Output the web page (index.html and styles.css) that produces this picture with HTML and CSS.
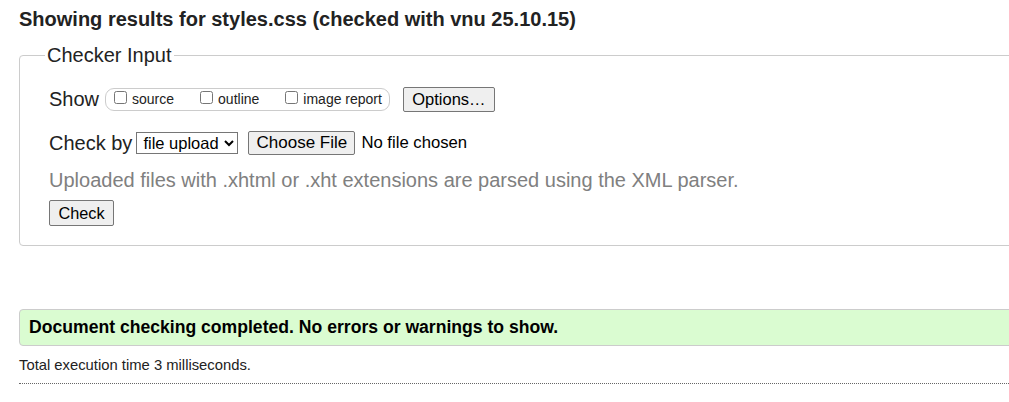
FILE: index.html
```html
<!DOCTYPE html>
<html lang="en">
<head>
<meta charset="utf-8">
<title>Showing results for styles.css - Nu Html Checker</title>
<link rel="stylesheet" href="styles.css">
</head>
<body>
<div class="page">
  <h2 class="title">Showing results for styles.css (checked with vnu 25.10.15)</h2>
  <form class="checker">
    <fieldset class="input-set">
      <legend class="legend">Checker Input</legend>
      <div class="row show-row">
        <span class="row-label">Show</span>
        <span class="opts">
          <label class="opt"><input type="checkbox" class="cb"><span>source</span></label>
          <label class="opt"><input type="checkbox" class="cb"><span>outline</span></label>
          <label class="opt"><input type="checkbox" class="cb"><span>image report</span></label>
        </span>
        <button type="button" class="btn btn-options">Options…</button>
      </div>
      <div class="row check-row">
        <span class="row-label">Check by</span>
        <select class="sel"><option>file upload</option></select>
        <span class="file">
          <button type="button" class="btn btn-file">Choose File</button>
          <span class="file-status">No file chosen</span>
        </span>
      </div>
      <p class="hint">Uploaded files with .xhtml or .xht extensions are parsed using the XML parser.</p>
      <div class="row submit-row">
        <button type="button" class="btn btn-check">Check</button>
      </div>
    </fieldset>
  </form>
  <p class="success">Document checking completed. No errors or warnings to show.</p>
  <p class="stats">Total execution time 3 milliseconds.</p>
  <hr class="rule">
</div>
</body>
</html>
```

FILE: styles.css
```css
html {
  overflow: hidden;
  background: #fff;
}

body {
  margin: 0;
  font-family: "Liberation Sans", Arial, sans-serif;
  color: #222;
}

.page {
  width: 1100px;
  padding-left: 19px;
}

.title {
  margin: 7px 0 0;
  font-size: 20px;
  line-height: 24px;
  font-weight: bold;
  color: #222;
}

.checker {
  margin: 13px 0 0;
}

.input-set {
  margin: 0;
  border: 1px solid #ccc;
  border-radius: 4px;
  padding: 0 0 19px 29px;
}

.legend {
  font-size: 20px;
  line-height: 22px;
  padding: 0 2px;
  margin-left: -4px;
  color: #222;
}

.row {
  display: flex;
  align-items: center;
}

.row-label {
  font-size: 20px;
  line-height: 22px;
}

.show-row {
  margin-top: 20px;
  height: 26px;
}

.opts {
  display: flex;
  align-items: center;
  gap: 26px;
  margin-left: 6px;
  height: 21px;
  padding: 0 7px 0 8px;
  border: 1px solid #ccc;
  border-radius: 9px;
}

.opt {
  display: flex;
  align-items: center;
  font-size: 14px;
}

.cb {
  width: 13px;
  height: 13px;
  margin: 0 5px 4px 0;
}

.btn {
  font-family: "Liberation Sans", Arial, sans-serif;
  font-size: 16.5px;
  color: #000;
  background: #efefef;
  border: 1px solid #767676;
  border-radius: 2px;
  padding: 0 9px;
}

.btn-options {
  margin-left: 13px;
  height: 25px;
  width: 92px;
  padding: 0;
}

.check-row {
  margin-top: 19px;
  height: 24px;
}

.sel {
  margin-left: 4px;
  width: 102px;
  height: 22px;
  font-family: "Liberation Sans", Arial, sans-serif;
  font-size: 16.5px;
  color: #000;
  border: 1px solid #767676;
  border-radius: 0;
  background: #fff;
  padding: 0 2px;
}

.file {
  display: flex;
  align-items: center;
  margin-left: 10px;
}

.btn-file {
  height: 24px;
  width: 107px;
  font-size: 17px;
  padding: 0;
}

.file-status {
  margin-left: 6px;
  font-size: 16.7px;
  color: #000;
}

.hint {
  margin: 14px 0 0;
  font-size: 20px;
  line-height: 22px;
  color: #808080;
}

.submit-row {
  margin-top: 9px;
}

.btn-check {
  height: 26px;
  width: 65px;
  padding: 0;
  font-size: 16.3px;
}

.success {
  margin: 63px 0 0;
  height: 35px;
  line-height: 35px;
  padding: 0 9px;
  border: 1px solid #ccc;
  border-radius: 4px;
  background: #dafcd1;
  font-size: 17.6px;
  font-weight: bold;
  color: #000;
}

.stats {
  margin: 10px 0 0;
  font-size: 14.8px;
  line-height: 18px;
  color: #222;
}

.rule {
  margin: 9px 0 0;
  border: 0;
  border-top: 1px dotted #666;
  height: 0;
}
```
